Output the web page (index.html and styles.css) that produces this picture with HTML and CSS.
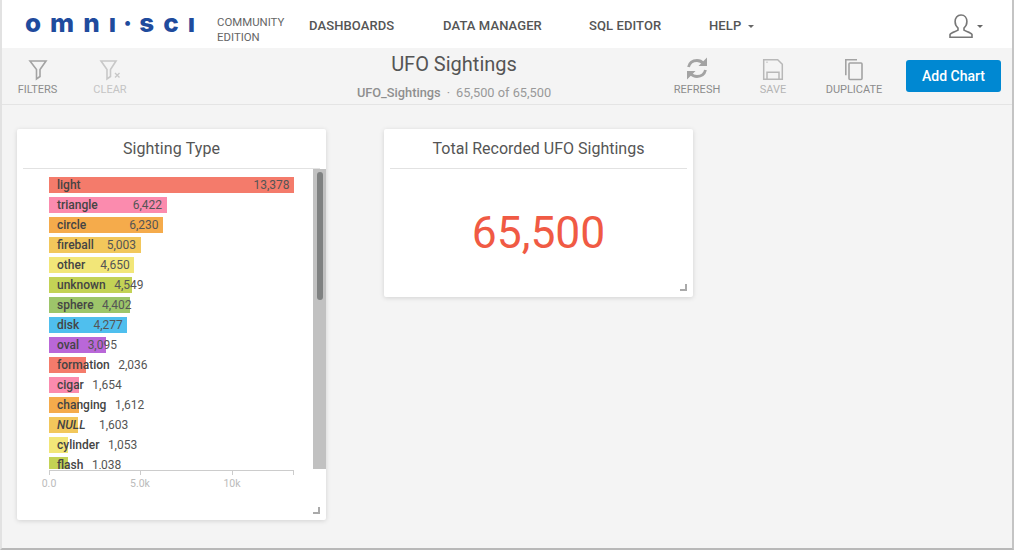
FILE: index.html
```html
<!DOCTYPE html>
<html lang="en">
<head>
  <meta charset="UTF-8" />
  <title>UFO Sightings</title>
  <link rel="stylesheet" href="styles.css">
</head>
<body>
  <div id="app">
    <header class="navBar">
      <div class="logo">omnı<span class="logoDot">·</span>scı</div>
      <div class="edition">COMMUNITY<br>EDITION</div>
      <nav class="navLinks">
        <a class="navDashboards">DASHBOARDS</a>
        <a class="navData">DATA MANAGER</a>
        <a class="navSql">SQL EDITOR</a>
        <a class="navHelp">HELP <span class="caret"></span></a>
      </nav>
      <div class="userMenu">
        <svg class="userIcon" width="26" height="24" viewBox="0 0 26 24" fill="none" stroke="#777" stroke-width="1.6">
          <path d="M13 1c-3.800 0-5.900 2.900-5.900 6.600 0 2.900 1.200 5 2.900 6.400v2.200c-1.500 1.200-6.900 1.900-8 4.300v2.700h22v-2.700c-1.100-2.400-6.500-3.100-8-4.300V14c1.700-1.400 2.900-3.500 2.900-6.400C18.900 3.900 16.800 1 13 1z"/>
        </svg>
        <span class="caret"></span>
      </div>
    </header>

    <div class="toolBar">
      <div class="toolGroup">
        <div class="tool filtersTool">
          <svg width="20" height="24" viewBox="0 0 20 24" fill="none" stroke="#a3a3a3" stroke-width="1.600">
            <path d="M2 4h16l-6 8.500v7l-3.500 2.500v-9.500z"/>
          </svg>
          <span>FILTERS</span>
        </div>
        <div class="tool clearTool faded">
          <svg width="24" height="24" viewBox="0 0 24 24" fill="none" stroke="#c8c8c8" stroke-width="1.600">
            <path d="M3 4h15l-5.500 8.500v7l-3.500 2.500v-9.500z"/>
            <path d="M17 16l4.500 4.500M21.500 16L17 20.500" stroke-width="1.400"/>
          </svg>
          <span>CLEAR</span>
        </div>
      </div>

      <div class="titleBlock">
        <div class="dashTitle">UFO Sightings</div>
        <div class="dashSub"><b>UFO_Sightings</b><i>·</i>65,500 of 65,500</div>
      </div>

      <div class="toolGroup rightTools">
        <div class="tool refreshTool">
          <svg width="24" height="24" viewBox="0 0 24 24" fill="none" stroke="#a3a3a3" stroke-width="2.800">
            <path d="M3.500 10C4.500 6 7.700 3.500 12 3.500c2.700 0 4.800 1.100 6.500 3"/>
            <path d="M20.500 13C19.500 17 16.300 19.500 12 19.500c-2.700 0-4.800-1.100-6.500-3"/>
            <path d="M22 .5v8.500h-8.500zM2 22.500V14h8.500z" fill="#a3a3a3" stroke="none"/>
          </svg>
          <span>REFRESH</span>
        </div>
        <div class="tool saveTool faded">
          <svg width="22" height="24" viewBox="0 0 22 24" fill="none" stroke="#b8b8b8" stroke-width="1.500">
            <path d="M1.700 2.700h14l4.600 4.600v15H1.700z"/>
            <path d="M5 22.300v-7h12v7"/>
            <path d="M4.500 5.200h1"/>
          </svg>
          <span>SAVE</span>
        </div>
        <div class="tool duplicateTool">
          <svg width="22" height="24" viewBox="0 0 22 24" fill="none" stroke="#a3a3a3" stroke-width="1.600">
            <path d="M14 2.800H2.800v15.500"/>
            <rect x="6" y="6" width="13" height="16.500" rx="1"/>
          </svg>
          <span>DUPLICATE</span>
        </div>
        <button class="addChart">Add Chart</button>
      </div>
    </div>

    <main class="dashboard">
      <section class="card chartCard">
        <h2 class="cardTitle">Sighting Type</h2>
        <div class="chartBody">
          <div class="rows">
            <div class="row c1"><div class="bar" style="width:245px"></div><div class="rowText" style="min-width:245px"><span class="key">light</span><span class="val">13,378</span></div></div>
            <div class="row c2"><div class="bar" style="width:117.6px"></div><div class="rowText" style="min-width:117.6px"><span class="key">triangle</span><span class="val">6,422</span></div></div>
            <div class="row c3"><div class="bar" style="width:114.1px"></div><div class="rowText" style="min-width:114.1px"><span class="key">circle</span><span class="val">6,230</span></div></div>
            <div class="row c4"><div class="bar" style="width:91.6px"></div><div class="rowText" style="min-width:91.6px"><span class="key">fireball</span><span class="val">5,003</span></div></div>
            <div class="row c5"><div class="bar" style="width:85.2px"></div><div class="rowText" style="min-width:85.2px"><span class="key">other</span><span class="val">4,650</span></div></div>
            <div class="row c6"><div class="bar" style="width:83.3px"></div><div class="rowText" style="min-width:83.3px"><span class="key">unknown</span><span class="val">4,549</span></div></div>
            <div class="row c7"><div class="bar" style="width:80.6px"></div><div class="rowText" style="min-width:80.6px"><span class="key">sphere</span><span class="val">4,402</span></div></div>
            <div class="row c8"><div class="bar" style="width:78.3px"></div><div class="rowText" style="min-width:78.3px"><span class="key">disk</span><span class="val">4,277</span></div></div>
            <div class="row c9"><div class="bar" style="width:56.7px"></div><div class="rowText" style="min-width:56.7px"><span class="key">oval</span><span class="val">3,095</span></div></div>
            <div class="row c1"><div class="bar" style="width:37.3px"></div><div class="rowText" style="min-width:37.3px"><span class="key">formation</span><span class="val">2,036</span></div></div>
            <div class="row c2"><div class="bar" style="width:30.3px"></div><div class="rowText" style="min-width:30.3px"><span class="key">cigar</span><span class="val">1,654</span></div></div>
            <div class="row c3"><div class="bar" style="width:29.5px"></div><div class="rowText" style="min-width:29.5px"><span class="key">changing</span><span class="val">1,612</span></div></div>
            <div class="row c4"><div class="bar" style="width:29.4px"></div><div class="rowText" style="min-width:29.4px"><span class="key nullKey">NULL</span><span class="val">1,603</span></div></div>
            <div class="row c5"><div class="bar" style="width:19.3px"></div><div class="rowText" style="min-width:19.3px"><span class="key">cylinder</span><span class="val">1,053</span></div></div>
            <div class="row c6"><div class="bar" style="width:19px"></div><div class="rowText" style="min-width:19px"><span class="key">flash</span><span class="val">1,038</span></div></div>
          </div>
          <div class="scrollTrack"><div class="scrollThumb"></div></div>
        </div>
        <div class="axis">
          <div class="axisLine">
            <span class="tick t0"></span><span class="tick t1"></span><span class="tick t2"></span><span class="tick t3"></span>
            <span class="tickLabel t0">0.0</span><span class="tickLabel t1">5.0k</span><span class="tickLabel t2">10k</span>
          </div>
        </div>
        <div class="resizeHandle"></div>
      </section>

      <section class="card numberCard">
        <h2 class="cardTitle">Total Recorded UFO Sightings</h2>
        <div class="bigNumber">65,500</div>
        <div class="resizeHandle"></div>
      </section>
    </main>
  </div>
</body>
</html>
```

FILE: styles.css
```css
* {
  box-sizing: border-box;
}
body {
  margin: 0;
  background: #f4f4f4;
  color: #555;
  font-family: Roboto, 'Liberation Sans', sans-serif;
  overflow: hidden;
}
#app {
  width: 1014px;
  height: 550px;
  border-left: 2px solid #e2e2e2;
  border-right: 2px solid #c4c4c4;
  border-bottom: 2px solid #b8b8b8;
  overflow: hidden;
}

/* top nav */
.navBar {
  display: flex;
  align-items: center;
  height: 48px;
  background: white;
  padding-left: 23px;
}
.logo {
  width: 192px;
  font-family: Inter, Roboto, sans-serif;
  font-size: 26px;
  font-weight: 800;
  letter-spacing: 9px;
  color: #1f4b9d;
  line-height: 48px;
  white-space: nowrap;
  margin-top: -3px;
}
.logoDot {
  margin: 0 -2px;
}
.edition {
  font-size: 11.4px;
  line-height: 15px;
  color: #666;
  width: 92px;
  margin-top: 11px;
}
.navLinks {
  display: flex;
  font-size: 13px;
  font-weight: 500;
  letter-spacing: 0.1px;
  color: #555;
  margin-top: 2px;
}
.navDashboards { width: 134px; }
.navData { width: 146px; }
.navSql { width: 120px; }
.caret {
  display: inline-block;
  width: 0;
  height: 0;
  margin-left: 3px;
  border: 3px solid transparent;
  border-top: 3.5px solid #666;
  border-bottom: 0;
  vertical-align: middle;
}
.userMenu {
  display: flex;
  align-items: center;
  margin-left: auto;
  padding: 4px 29px 0 0;
}

/* tool bar */
.toolBar {
  display: flex;
  height: 57px;
  border-bottom: 1px solid #e4e4e4;
  padding: 0 11px 0 15px;
}
.toolGroup {
  display: flex;
}
.tool {
  display: flex;
  flex-direction: column;
  align-items: center;
  padding-top: 9px;
  font-size: 11px;
  line-height: 13px;
  color: #8c8c8c;
  gap: 2px;
  white-space: nowrap;
}
.tool svg {
  height: 24px;
}
.tool.faded {
  color: #b4b4b4;
}
.clearTool.faded {
  color: #c4c4c4;
}
.filtersTool {
  width: 41px;
}
.clearTool {
  width: 34px;
  margin-left: 35px;
}
.titleBlock {
  margin-left: 221px;
  width: 212px;
  text-align: center;
}
.dashTitle {
  font-size: 20px;
  color: #555;
  line-height: 24px;
  margin-top: 4px;
}
.dashSub {
  font-size: 12.8px;
  color: #999;
  margin-top: 10px;
  line-height: 14px;
}
.dashSub b {
  font-weight: 500;
  color: #8f8f8f;
}
.dashSub i {
  font-style: normal;
  margin: 0 6px;
}
.rightTools {
  margin-left: auto;
}
.refreshTool {
  width: 48px;
}
.saveTool {
  width: 28px;
  margin-left: 38px;
}
.duplicateTool {
  width: 58px;
  margin-left: 38px;
}
.addChart {
  width: 95px;
  height: 32px;
  margin: 12px 0 0 23px;
  background: #0088d2;
  border: none;
  border-radius: 3px;
  color: white;
  font-family: inherit;
  font-size: 14px;
  font-weight: 500;
}

/* cards */
.dashboard {
  display: flex;
  align-items: flex-start;
  gap: 58px;
  padding: 24px 0 0 15px;
}
.card {
  position: relative;
  width: 309px;
  background: white;
  border-radius: 2px;
  box-shadow: 0 1px 5px rgba(0,0,0,0.14);
  padding: 0 6px;
}
.cardTitle {
  margin: 0;
  height: 40px;
  border-bottom: 1px solid #e2e2e2;
  text-align: center;
  font-size: 16px;
  font-weight: 400;
  line-height: 39px;
  color: #555;
}
.chartCard {
  height: 391px;
}
.chartCard .cardTitle {
  letter-spacing: 0.1px;
}
.numberCard {
  height: 168px;
}
.chartBody {
  display: flex;
  height: 300px;
  margin-right: -6px;
}
.rows {
  flex: 1;
  height: 300px;
  padding: 8px 0 0 26px;
  overflow: hidden;
}
.row {
  position: relative;
  height: 20px;
  font-size: 12px;
  line-height: 16px;
}
.bar {
  position: absolute;
  top: 0;
  left: 0;
  height: 16px;
}
.rowText {
  position: relative;
  display: inline-flex;
  justify-content: space-between;
  gap: 8.5px;
  padding: 0 4.5px 0 8px;
}
.key {
  font-weight: 500;
  color: #444;
}
.nullKey {
  font-style: italic;
  margin-right: 5px;
}
.val {
  color: #555;
}
.c1 .bar { background: #f47b6b; }
.c2 .bar { background: #fb8bae; }
.c3 .bar { background: #f5ab4b; }
.c4 .bar { background: #f2c75b; }
.c5 .bar { background: #f2e678; }
.c6 .bar { background: #c3d255; }
.c7 .bar { background: #9dc56a; }
.c8 .bar { background: #4fbfee; }
.c9 .bar { background: #b967d8; }
.scrollTrack {
  width: 13px;
  height: 300px;
  background: #c1c1c1;
  padding: 3px 3px 0 4px;
}
.scrollThumb {
  height: 128px;
  border-radius: 3px;
  background: #7f8181;
}
.axis {
  padding: 1px 0 0 26px;
}
.axisLine {
  position: relative;
  width: 245px;
  height: 1px;
  background: #ccc;
}
.tick {
  position: absolute;
  top: 0;
  width: 1px;
  height: 5px;
  background: #ccc;
}
.tick.t0 { left: 0; }
.tick.t1 { left: 91px; }
.tick.t2 { left: 183px; }
.tick.t3 { left: 244px; }
.tickLabel {
  position: absolute;
  top: 7px;
  transform: translateX(-50%);
  font-size: 10.5px;
  color: #bbb;
}
.tickLabel.t0 { left: 0; }
.tickLabel.t1 { left: 91px; }
.tickLabel.t2 { left: 183px; }
.bigNumber {
  text-align: center;
  font-size: 44.4px;
  color: #f05a44;
  line-height: 54px;
  margin-top: 37px;
}
.resizeHandle {
  position: absolute;
  right: 6px;
  bottom: 6px;
  width: 7px;
  height: 7px;
  border-right: 2px solid #aaa;
  border-bottom: 2px solid #aaa;
}
```
